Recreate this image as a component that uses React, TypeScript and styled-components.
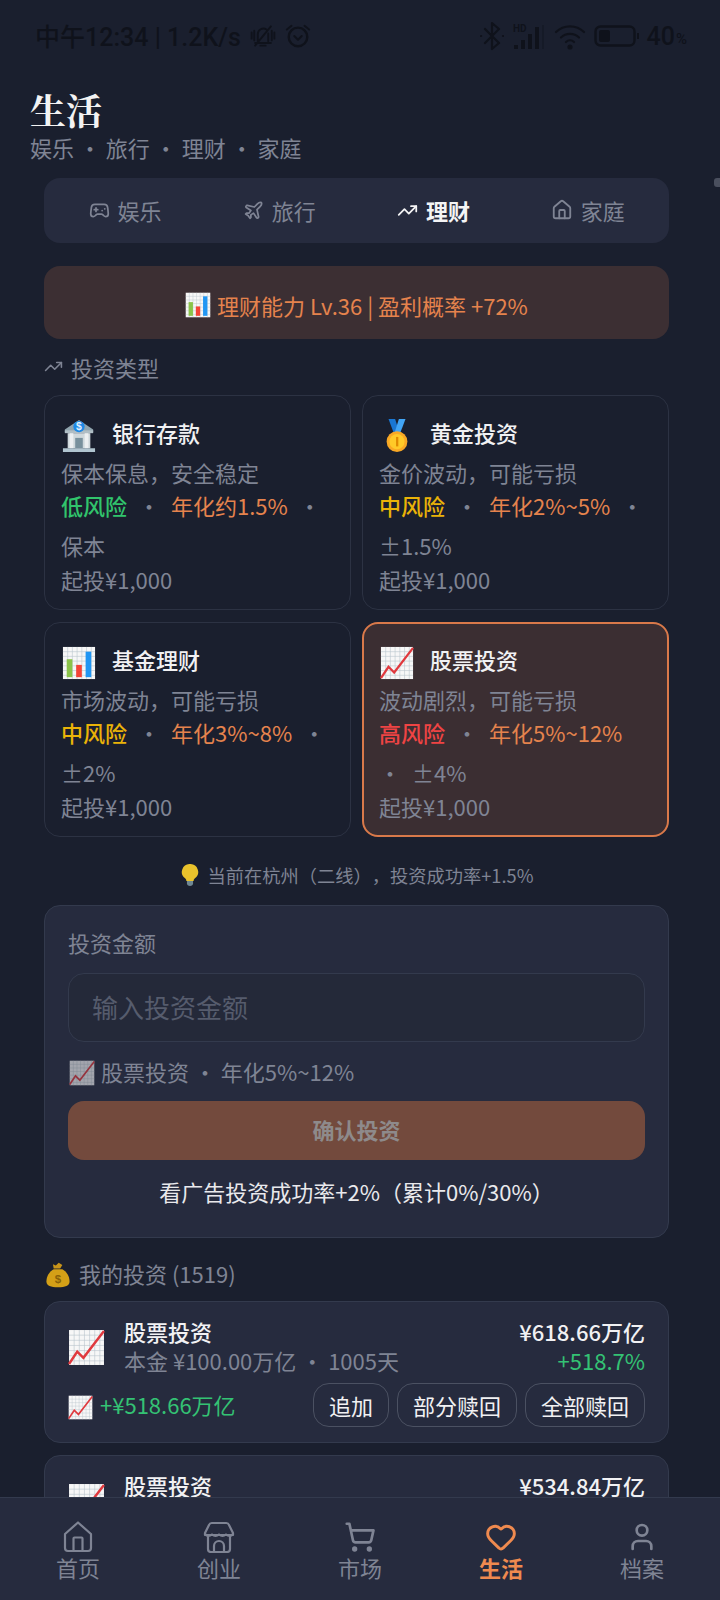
import React from "react";
import styled, { createGlobalStyle } from "styled-components";
import { Gamepad2, Plane, TrendingUp, House, ShoppingCart, Heart, User } from "lucide-react";

const Global = createGlobalStyle`
  html, body { margin: 0; padding: 0; background: #1a1f2e; }
  * { box-sizing: border-box; }
  body { font-family: "Noto Sans CJK SC", "Noto Sans", sans-serif; text-spacing-trim: space-all; }
`;

const Screen = styled.div`
  position: relative;
  width: 720px;
  height: 1600px;
  overflow: hidden;
  background: #1a1f2e;
  display: flex;
  flex-direction: column;
`;
const StatusBar = styled.div`
  flex: none;
  height: 72px;
  padding: 0 33px 0 35px;
  display: flex;
  align-items: center;
  justify-content: space-between;
  color: #0f121b;
  font-family: Roboto, "Noto Sans CJK SC", sans-serif;
  font-size: 25px;
  font-weight: 500;
`;
const StatusGroup = styled.div`
  display: flex;
  align-items: center;
  gap: 8px;
`;
const StatusText = styled.span`
  padding-bottom: 3px;
`;
const Percent = styled.span`
  font-size: 15px;
  margin-left: -7px;
  align-self: flex-end;
  margin-bottom: 3px;
`;
const Scroller = styled.div`
  flex: 1;
  min-height: 0;
  overflow: hidden;
`;
const Header = styled.header`
  padding: 17px 30px 0;
  height: 106px;
`;
const Title = styled.h1`
  margin: 0;
  font-family: "Noto Serif CJK SC", "Noto Sans CJK SC", serif;
  font-size: 36px;
  line-height: 42px;
  font-weight: 700;
  color: #f3f3f3;
`;
const Subtitle = styled.div`
  font-size: 22px;
  line-height: 33px;
  color: #7f8494;
  margin-top: 0;
`;
const Main = styled.main`
  padding: 0 51px 0 44px;
  display: flex;
  flex-direction: column;
`;
const Tabs = styled.nav`
  height: 65px;
  padding: 0 4px;
  background: #262b3e;
  border-radius: 16px;
  display: grid;
  grid-template-columns: repeat(4, 1fr);
`;
const Tab = styled.div<{ $active?: boolean }>`
  padding-bottom: 1px;
  display: flex;
  align-items: center;
  justify-content: center;
  gap: 8px;
  font-size: 22px;
  font-weight: ${(p) => (p.$active ? 700 : 400)};
  color: ${(p) => (p.$active ? "#f4f4f5" : "#7f8494")};
`;
const Banner = styled.div`
  margin-top: 23px;
  height: 73px;
  padding-top: 5px;
  background: #3c2f33;
  border-radius: 16px;
  display: flex;
  align-items: center;
  justify-content: center;
  gap: 6px;
  font-size: 22px;
  color: #e5834d;
`;
const SectionLabel = styled.div<{ $top: number }>`
  margin-top: ${(p) => p.$top}px;
  height: 33px;
  display: flex;
  align-items: center;
  gap: 8px;
  font-size: 22px;
  color: #7f8494;
`;
const Grid = styled.div`
  margin-top: 12px;
  display: grid;
  grid-template-columns: 307px 307px;
  gap: 12px 11px;
`;
const Card = styled.div<{ $selected?: boolean }>`
  height: 215px;
  padding: ${(p) => (p.$selected ? "15px 15px 0" : "16px 16px 0")};
  border: ${(p) => (p.$selected ? "2px solid #d9794a" : "1px solid #2c3243")};
  border-radius: 16px;
  background: ${(p) => (p.$selected ? "#3b2e32" : "#1a1f2e")};
`;
const CardHead = styled.div`
  height: 44px;
  display: flex;
  align-items: center;
  gap: 16px;
`;
const Lifted = styled.span<{ $by: number; $left?: number }>`
  flex: none;
  display: flex;
  margin-top: ${(p) => p.$by}px;
  margin-left: ${(p) => p.$left ?? 0}px;
`;
const CardName = styled.div`
  font-size: 22px;
  font-weight: 500;
  color: #f1f1f3;
  margin-bottom: 5px;
`;
const CardLine = styled.div`
  font-size: 22px;
  line-height: 33px;
  color: #7f8494;
`;
const Meta = styled.div`
  display: flex;
  flex-wrap: wrap;
  gap: 7px 11px;
  margin-bottom: 1px;
  font-size: 22px;
  line-height: 33px;
  color: #7f8494;
`;
const Risk = styled.span<{ $c: string }>`
  color: ${(p) => p.$c};
  font-weight: 500;
`;
const Rate = styled.span`
  color: #e5834d;
`;
const Dot = styled.span`
  width: 22px;
  text-align: center;
`;
const Hint = styled.div`
  margin-top: 24px;
  height: 28px;
  display: flex;
  align-items: center;
  justify-content: center;
  gap: 6px;
  font-size: 18.25px;
  color: #7f8494;
`;
const FormCard = styled.section`
  margin-top: 16px;
  height: 333px;
  padding: 20px 23px 0;
  background: #262b3e;
  border: 1px solid #333a4d;
  border-radius: 16px;
`;
const FormLabel = styled.div`
  font-size: 22px;
  line-height: 33px;
  color: #7f8494;
`;
const AmountInput = styled.input`
  display: block;
  width: 100%;
  height: 69px;
  margin-top: 14px;
  padding: 0 23px 3px;
  background: #242939;
  border: 1px solid #333a4d;
  border-radius: 16px;
  font: inherit;
  font-size: 26px;
  color: #f1f1f3;
  outline: none;
  &::placeholder { color: #565c6d; opacity: 1; }
`;
const Picked = styled.div`
  margin-top: 13px;
  height: 33px;
  display: flex;
  align-items: center;
  gap: 6px;
  font-size: 22px;
  color: #7f8494;
`;
const PickedText = styled.span`
  padding-bottom: 2px;
`;
const Confirm = styled.button`
  display: block;
  width: 100%;
  height: 59px;
  margin-top: 13px;
  padding: 0 0 4px;
  border: 0;
  border-radius: 16px;
  background: #734a3d;
  color: #8e8a8b;
  font: inherit;
  font-size: 22px;
  font-weight: 700;
`;
const AdLine = styled.div`
  margin-top: 15px;
  text-align: center;
  font-size: 22px;
  line-height: 33px;
  color: #e9e9ec;
`;
const HoldingCard = styled.article<{ $top?: number }>`
  margin-top: ${(p) => p.$top ?? 0}px;
  margin-bottom: 12px;
  height: 142px;
  padding: 14px 23px 0;
  background: #262b3e;
  border: 1px solid #333a4d;
  border-radius: 16px;
`;
const HoldingTop = styled.div`
  display: flex;
  align-items: center;
  gap: 19px;
`;
const HoldingInfo = styled.div`
  flex: 1;
  display: flex;
  flex-direction: column;
`;
const HoldingRight = styled.div`
  display: flex;
  flex-direction: column;
  align-items: flex-end;
`;
const HoldingName = styled.div`
  font-size: 22px;
  line-height: 30px;
  font-weight: 500;
  color: #f1f1f3;
`;
const HoldingSub = styled.div`
  font-size: 22px;
  line-height: 29px;
  color: #7f8494;
`;
const Gain = styled.div`
  font-size: 22px;
  line-height: 29px;
  color: #34c274;
`;
const HoldingBottom = styled.div`
  margin-top: 8px;
  display: flex;
  align-items: center;
  justify-content: space-between;
`;
const Profit = styled.div`
  display: flex;
  align-items: center;
  gap: 7px;
  font-size: 22px;
  color: #34c274;
`;
const ProfitText = styled.span`
  padding-bottom: 2px;
`;
const Actions = styled.div`
  display: flex;
  gap: 8px;
`;
const ActionBtn = styled.button`
  height: 44px;
  padding: 0 15px;
  border: 1px solid #4b5162;
  border-radius: 16px;
  background: transparent;
  color: #f1f1f3;
  font: inherit;
  font-size: 22px;
`;
const BottomNav = styled.nav`
  flex: none;
  height: 103px;
  padding: 0 7.5px;
  background: #262b3e;
  border-top: 1px solid #333a4d;
  display: grid;
  grid-template-columns: repeat(5, 1fr);
`;
const NavItem = styled.div<{ $active?: boolean }>`
  padding-top: 23px;
  display: flex;
  flex-direction: column;
  align-items: center;
  font-size: 22px;
  line-height: 33px;
  font-weight: ${(p) => (p.$active ? 700 : 400)};
  color: ${(p) => (p.$active ? "#ef8a4f" : "#7f8494")};
  svg { height: 32px; margin-bottom: -2px; }
`;
const ScrollThumb = styled.div`
  position: absolute;
  right: 0;
  top: 178px;
  width: 6px;
  height: 9px;
  border-radius: 3px 0 0 3px;
  background: #4a4f5e;
`;

const Icon = ({ size, children, dim }: { size: number; children: React.ReactNode; dim?: boolean }) => (
  <svg width={size} height={size} viewBox="0 0 36 36" style={{ flex: "none", opacity: dim ? 0.6 : 1 }}>
    {children}
  </svg>
);

const Grid36 = () => (
  <>
    <rect x="1" y="1" width="34" height="34" fill="#f7f7f7" />
    <path
      d="M1 6h34M1 11h34M1 16h34M1 21h34M1 26h34M1 31h34M6 1v34M11 1v34M16 1v34M21 1v34M26 1v34M31 1v34"
      stroke="#b9c4cc"
      strokeWidth=".6"
    />
  </>
);
const ChartUp = ({ size, dim }: { size: number; dim?: boolean }) => (
  <Icon size={size} dim={dim}>
    <Grid36 />
    <path d="M1 34L9 22l6 6L35 2" fill="none" stroke="#e0393e" strokeWidth="2.400" />
  </Icon>
);
const BarChart = ({ size }: { size: number }) => (
  <Icon size={size}>
    <Grid36 />
    <rect x="5" y="14" width="6" height="19" fill="#8bc34a" />
    <rect x="15" y="20" width="6" height="13" fill="#f44336" />
    <rect x="25" y="6" width="6" height="27" fill="#2196f3" />
  </Icon>
);
const Bank = ({ size }: { size: number }) => (
  <Icon size={size}>
    <path d="M18 1L3 11v3h30v-3z" fill="#90a4ae" />
    <path d="M3 12h30v3H3z" fill="#b0bec5" />
    <circle cx="18" cy="8" r="6" fill="#1e88e5" />
    <text x="18" y="12" textAnchor="middle" fontSize="11" fontWeight="700" fill="#dfefff" fontFamily="Liberation Sans">$</text>
    <path d="M6 15h24v16H6z" fill="#cfd8dc" />
    <path d="M8 15h4v16H8zM24 15h4v16h-4z" fill="#eceff1" />
    <path d="M14 20h8v11h-8z" fill="#78909c" />
    <path d="M1 31h34v4H1z" fill="#b0c4cf" />
  </Icon>
);
const Medal = ({ size }: { size: number }) => (
  <Icon size={size}>
    <path d="M9 0h7l5 16h-6z" fill="#1976d2" />
    <path d="M27 0h-7l-5 16h6z" fill="#42a5f5" />
    <circle cx="18" cy="24" r="11" fill="#f9a825" />
    <circle cx="18" cy="24" r="8" fill="#ffca28" />
    <path d="M17 19h2.400v10H17z" fill="#e08a00" />
  </Icon>
);
const Bulb = ({ size }: { size: number }) => (
  <Icon size={size}>
    <path d="M18 0a13 13 0 0 0-8 23.500c1.500 1.300 2 3 2 4.500h12c0-1.500.5-3.200 2-4.500A13 13 0 0 0 18 0z" fill="#e9c22c" />
    <path d="M13 28h10v4c0 2-2 4-5 4s-5-2-5-4z" fill="#6f8792" />
  </Icon>
);
const MoneyBag = ({ size }: { size: number }) => (
  <Icon size={size}>
    <path d="M12 10C4 15 2 22 2 27c0 6 6 8 16 8s16-2 16-8c0-5-2-12-10-17z" fill="#d4a017" />
    <path d="M12 9l-1-6 4 2 4-4 5 3-3 5z" fill="#c8941a" />
    <text x="18" y="29" textAnchor="middle" fontSize="16" fontWeight="700" fill="#8a6208" fontFamily="Liberation Sans">$</text>
  </Icon>
);

const Glyph = styled.svg`
  flex: none;
  fill: none;
  stroke: currentColor;
  stroke-width: 2.2;
  stroke-linecap: round;
  stroke-linejoin: round;
`;
const BellOff = () => (
  <Glyph width="28" height="30" viewBox="0 0 32 32">
    <path d="M10 22V14a6.500 6.500 0 0 1 10-5.500M22 13v9M7 24h18M13 27h6M7 27L25 5M3 12v7M29 12v7M6 10v11M26 10v11" />
  </Glyph>
);
const Alarm = () => (
  <Glyph width="26" height="26" viewBox="0 0 28 28">
    <circle cx="14" cy="15" r="10" strokeWidth="2.600" />
    <path d="M10 14l4 4 4-4M2 7l5-4M26 7l-5-4" />
  </Glyph>
);
const Bluetooth = () => (
  <Glyph width="24" height="30" viewBox="0 0 24 30" strokeWidth="2.600">
    <path d="M5 8l14 14-7 6V2l7 6L5 22M1 15h.1M23 15h.1" />
  </Glyph>
);
const Signal = () => (
  <svg width="34" height="30" viewBox="0 0 34 30" fill="currentColor" style={{ flex: "none" }}>
    <path d="M2 24h4v4H2zM9 19h4v9H9zM16 13h4v15h-4zM23 6h4v22h-4z" />
    <path d="M30 4h2v24h-2z" opacity=".35" />
    <text x="1" y="11" fontSize="10" fontWeight="700" fontFamily="Roboto">HD</text>
  </svg>
);
const Wifi = () => (
  <Glyph width="32" height="30" viewBox="0 0 32 30" strokeWidth="3">
    <path d="M2 11a20 20 0 0 1 28 0M7 16.500a13 13 0 0 1 18 0M12 21a6 6 0 0 1 8 0" />
    <circle cx="16" cy="26" r="1.500" fill="currentColor" />
  </Glyph>
);
const Battery = () => (
  <svg width="45" height="22" viewBox="0 0 45 22" style={{ flex: "none" }}>
    <rect x="1.500" y="1.500" width="39" height="19" rx="5" fill="none" stroke="currentColor" strokeWidth="2.400" />
    <rect x="5" y="5" width="11" height="12" rx="2" fill="currentColor" />
    <rect x="43" y="8" width="2" height="6" fill="currentColor" />
  </svg>
);
const NavHome = () => (
  <Glyph width="30" height="32" viewBox="0 0 30 32" strokeWidth="2.400">
    <path d="M2 13L15 1.500 28 13v14a3 3 0 0 1-3 3H5a3 3 0 0 1-3-3z" />
    <path d="M10.500 30V17.500a1 1 0 0 1 1-1h7a1 1 0 0 1 1 1V30" />
  </Glyph>
);
const NavStore = () => (
  <Glyph width="32" height="32" viewBox="0 0 32 32" strokeWidth="2.400">
    <path d="M9 2h14a3 3 0 0 1 3 2l4 8v2H2v-2l4-8a3 3 0 0 1 3-2z" />
    <path d="M2 13c2 2.500 4.500 2.500 7 .5 2.500 2 4.500 2 7 0 2.500 2 4.500 2 7 0 2.500 2 5 2 7-.5" />
    <path d="M5 16v12a3 3 0 0 0 3 3h16a3 3 0 0 0 3-3V16" />
    <path d="M11 31v-6a5 5 0 0 1 10 0v6" />
  </Glyph>
);

const types = [
  { icon: <Bank size={34} />, name: "银行存款", desc: "保本保息，安全稳定", risk: "低风险", c: "#31c46c", rate: "年化约1.5%", vol: "保本" },
  { icon: <Medal size={34} />, name: "黄金投资", desc: "金价波动，可能亏损", risk: "中风险", c: "#eab308", rate: "年化2%~5%", vol: "±1.5%" },
  { icon: <BarChart size={34} />, name: "基金理财", desc: "市场波动，可能亏损", risk: "中风险", c: "#eab308", rate: "年化3%~8%", vol: "±2%" },
  { icon: <ChartUp size={34} />, name: "股票投资", desc: "波动剧烈，可能亏损", risk: "高风险", c: "#ef4444", rate: "年化5%~12%", vol: "±4%", selected: true },
];

export default function App() {
  return (
    <Screen>
      <Global />
      <StatusBar>
        <StatusGroup>
          <StatusText>中午12:34 | 1.2K/s</StatusText>
          <BellOff />
          <Alarm />
        </StatusGroup>
        <StatusGroup>
          <Bluetooth />
          <Signal />
          <Wifi />
          <Battery />
          <span>40</span>
          <Percent>%</Percent>
        </StatusGroup>
      </StatusBar>
      <Scroller>
        <Header>
          <Title>生活</Title>
          <Subtitle>娱乐 · 旅行 · 理财 · 家庭</Subtitle>
        </Header>
        <Main>
          <Tabs>
            <Tab><Gamepad2 size={21} />娱乐</Tab>
            <Tab><Plane size={21} />旅行</Tab>
            <Tab $active><TrendingUp size={21} />理财</Tab>
            <Tab><House size={22} />家庭</Tab>
          </Tabs>
          <Banner><BarChart size={26} />理财能力 Lv.36 | 盈利概率 +72%</Banner>
          <SectionLabel $top={11}><TrendingUp size={19} />投资类型</SectionLabel>
          <Grid>
            {types.map((t) => (
              <Card key={t.name} $selected={t.selected}>
                <CardHead><Lifted $by={3} $left={1}>{t.icon}</Lifted><CardName>{t.name}</CardName></CardHead>
                <CardLine>{t.desc}</CardLine>
                <Meta>
                  <Risk $c={t.c}>{t.risk}</Risk>
                  <Dot>·</Dot>
                  <Rate>{t.rate}</Rate>
                  <Dot>·</Dot>
                  <span>{t.vol}</span>
                </Meta>
                <CardLine>起投¥1,000</CardLine>
              </Card>
            ))}
          </Grid>
          <Hint><Bulb size={22} />当前在杭州（二线），投资成功率+1.5%</Hint>
          <FormCard>
            <FormLabel>投资金额</FormLabel>
            <AmountInput placeholder="输入投资金额" />
            <Picked><Lifted $by={3} $left={1}><ChartUp size={26} dim /></Lifted><PickedText>股票投资 · 年化5%~12%</PickedText></Picked>
            <Confirm>确认投资</Confirm>
            <AdLine>看广告投资成功率+2%（累计0%/30%）</AdLine>
          </FormCard>
          <SectionLabel $top={18}><Lifted $by={4} $left={1}><MoneyBag size={26} /></Lifted>我的投资 (1519)</SectionLabel>
          <HoldingCard $top={12}>
            <HoldingTop>
              <Lifted $by={4}><ChartUp size={37} /></Lifted>
              <HoldingInfo>
                <HoldingName>股票投资</HoldingName>
                <HoldingSub>本金 ¥100.00万亿 · 1005天</HoldingSub>
              </HoldingInfo>
              <HoldingRight>
                <HoldingName>¥618.66万亿</HoldingName>
                <Gain>+518.7%</Gain>
              </HoldingRight>
            </HoldingTop>
            <HoldingBottom>
              <Profit><Lifted $by={4}><ChartUp size={25} /></Lifted><ProfitText>+¥518.66万亿</ProfitText></Profit>
              <Actions>
                <ActionBtn>追加</ActionBtn>
                <ActionBtn>部分赎回</ActionBtn>
                <ActionBtn>全部赎回</ActionBtn>
              </Actions>
            </HoldingBottom>
          </HoldingCard>
          <HoldingCard>
            <HoldingTop>
              <Lifted $by={4}><ChartUp size={37} /></Lifted>
              <HoldingInfo>
                <HoldingName>股票投资</HoldingName>
                <HoldingSub>本金 ¥100.00万亿 · 1005天</HoldingSub>
              </HoldingInfo>
              <HoldingRight>
                <HoldingName>¥534.84万亿</HoldingName>
                <Gain>+434.8%</Gain>
              </HoldingRight>
            </HoldingTop>
          </HoldingCard>
        </Main>
      </Scroller>
      <BottomNav>
        <NavItem><NavHome />首页</NavItem>
        <NavItem><NavStore />创业</NavItem>
        <NavItem><ShoppingCart size={32} strokeWidth={2} />市场</NavItem>
        <NavItem $active><Heart size={34} strokeWidth={2.2} />生活</NavItem>
        <NavItem><User size={32} strokeWidth={2} />档案</NavItem>
      </BottomNav>
      <ScrollThumb />
    </Screen>
  );
}
